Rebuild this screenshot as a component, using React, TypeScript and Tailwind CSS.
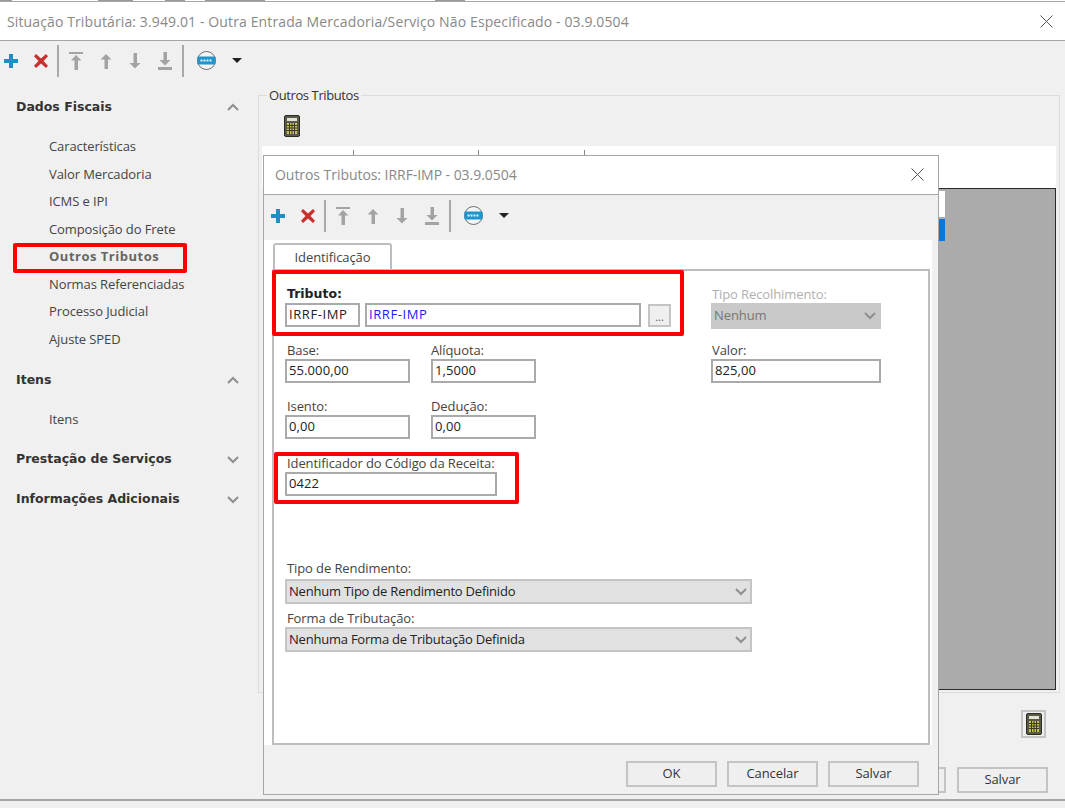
const FONT_BOLD = "font-['DejaVu_Sans',sans-serif] font-bold tracking-normal";

function PlusIcon() {
  return (
    <svg width="16" height="16" viewBox="0 0 16 16">
      <path d="M6 1h4v5h5v4h-5v5H6v-5H1V6h5z" fill="#1b8fc6" />
    </svg>
  );
}

function CrossIcon() {
  return (
    <svg width="16" height="16" viewBox="0 0 16 16">
      <path d="M3 1l5 4.500L13 1l2 2.200L10.500 8l4.500 4.800L13 15l-5-4.500L3 15l-2-2.200L5.500 8 1 3.200z" fill="#c9302c" />
    </svg>
  );
}

function ArrowUp({ bar }: { bar?: boolean }) {
  return (
    <svg width="16" height="18" viewBox="0 0 16 18" fill="#a3a3a3">
      {bar && <rect x="1" y="0" width="14" height="2" />}
      <path d={bar ? "M8 3l5.500 5.500H10V18H6.500V8.500H3z" : "M8 2l5.500 5.500H10V17H6.500V7.500H2.500z"} />
    </svg>
  );
}

function ArrowDown({ bar }: { bar?: boolean }) {
  return (
    <svg width="16" height="18" viewBox="0 0 16 18" fill="#a3a3a3">
      <path d={bar ? "M6.500 0H10v8h3.500L8 13.500 2.500 8h4z" : "M6.500 1H10v10h3.500L8 16.500 2.500 11h4z"} />
      {bar && <rect x="1" y="15" width="14" height="3" />}
    </svg>
  );
}

function WebIcon() {
  return (
    <svg width="19" height="19" viewBox="0 0 19 19">
      <circle cx="9.500" cy="9.500" r="9" fill="#f4f4f4" stroke="#6f6f6f" strokeWidth="1" />
      <rect x="0.500" y="5.500" width="18" height="8" rx="1" fill="#1f95cc" />
      <path d="M3.500 9.500h12" stroke="#e4f3fa" strokeWidth="2" strokeDasharray="2 1" />
    </svg>
  );
}

function Calculator() {
  return (
    <svg width="16" height="22" viewBox="0 0 16 22">
      <rect x="0.500" y="0.500" width="15" height="21" rx="1.500" fill="#5a5a48" stroke="#2b2b20" />
      <rect x="3" y="3" width="10" height="3" fill="#e3e3d8" />
      <rect x="3" y="8" width="10" height="11" fill="#c9c458" />
      <path d="M5.500 8v11M8 8v11M10.500 8v11M3 10.500h10M3 13h10M3 15.500h10" stroke="#3a3a20" strokeWidth="1" />
    </svg>
  );
}

function Toolbar() {
  return (
    <div className="flex h-full items-center">
      <div className="flex w-[19px] justify-end"><PlusIcon /></div>
      <div className="flex w-[30px] justify-end"><CrossIcon /></div>
      <div className="ml-[8px] mr-[9px] h-[32px] w-[2px] bg-[#a9a9a9]" />
      <div className="flex w-[16px] justify-center"><ArrowUp bar /></div>
      <div className="ml-[14px] flex w-[16px] justify-center"><ArrowUp /></div>
      <div className="ml-[13px] flex w-[16px] justify-center"><ArrowDown /></div>
      <div className="ml-[14px] flex w-[16px] justify-center"><ArrowDown bar /></div>
      <div className="ml-[9px] mr-[13px] h-[32px] w-[2px] bg-[#a9a9a9]" />
      <WebIcon />
      <div className="ml-[16px] h-0 w-0 border-x-[5px] border-t-[5px] border-x-transparent border-t-[#222]" />
    </div>
  );
}

function CloseX() {
  return (
    <svg width="13" height="13" viewBox="0 0 13 13" stroke="#555" strokeWidth="1" fill="none">
      <path d="M0.500 0.500l12 12M12.500 0.500l-12 12" />
    </svg>
  );
}

function Chevron({ up }: { up?: boolean }) {
  return (
    <svg width="12" height="8" viewBox="0 0 12 8" fill="none" stroke="#8f8f8f" strokeWidth="2">
      <path d={up ? "M1 7l5-5 5 5" : "M1 1l5 5 5-5"} />
    </svg>
  );
}

function SideHeader({ label, up, className }: { label: string; up?: boolean; className?: string }) {
  return (
    <div className={`flex h-[20px] items-center justify-between pl-[16px] pr-[19px] ${className ?? ""}`}>
      <span className={`${FONT_BOLD} text-[12.5px] text-[#333]`}>{label}</span>
      <Chevron up={up} />
    </div>
  );
}

function SideItem({ label, active }: { label: string; active?: boolean }) {
  return (
    <div className="relative flex h-[27.5px] items-center pl-[49px]">
      <span className={active ? "font-bold tracking-[0.5px] text-[#666]" : "text-[#444]"}>{label}</span>
    </div>
  );
}

function Field({ label, value, className, wrap, labelPad }: { label: string; value: string; className: string; wrap?: string; labelPad?: string }) {
  return (
    <div className={wrap}>
      <div className={`h-[17px] leading-[16px] text-[#444] ${labelPad ?? ""}`}>{label}</div>
      <div className={`flex h-[24px] items-center border-2 border-[#aaa] bg-white pl-[2px] tracking-[0.1px] text-[#222] ${className}`}>{value}</div>
    </div>
  );
}

function SelectBox({ value }: { value: string }) {
  return (
    <div className="flex h-[25px] w-[467px] items-center justify-between border-2 border-[#c4c4c4] bg-[#e1e1e1] pl-[2px] pr-[3px] tracking-[-0.22px] text-[#222]">
      <span>{value}</span>
      <Chevron />
    </div>
  );
}

function ActionButton({ label }: { label?: string }) {
  return (
    <div className="flex h-[26px] w-[91px] items-center justify-center border-2 border-[#c4c4c4] bg-[#efefef] text-[#333]">
      {label}
    </div>
  );
}

function Dialog() {
  return (
    <div className="absolute left-[263px] top-[155px] flex h-[640px] w-[676px] flex-col border border-[#a6a6a6] bg-[#f0f0f0]">
      <div className="flex h-[39px] items-center justify-between border-b border-[#a6a6a6] bg-white pb-px pl-[11px] pr-[14px] text-[14px] text-[#888]">
        <span className="tracking-[-0.05px]">Outros Tributos: IRRF-IMP - 03.9.0504</span>
        <CloseX />
      </div>
      <div className="h-[45px] pb-[4px] pl-[3px]"><Toolbar /></div>
      <div className="mr-[6px] flex flex-1 flex-col bg-white pl-[8px] pr-[2px]">
        <div className="flex h-[29px] items-end pl-[1px]">
          <div className="-mb-px flex h-[27px] w-[119px] items-center justify-center rounded-t-[3px] border-x-2 border-t-2 border-[#bdbdbd] bg-white text-[#444]">
            Identificação
          </div>
        </div>
        <div className="h-[476px] border-2 border-[#bdbdbd] bg-white pl-[11px] pt-[14px]">
          <div className="flex">
            <div className="w-[426px]">
              <div className={`${FONT_BOLD} h-[18px] pl-[2px] text-[12.5px] leading-[18px] text-[#222]`}>Tributo:</div>
              <div className="flex items-start">
                <div className="flex h-[24px] w-[75px] items-center border-2 border-[#aaa] pl-[2px] tracking-[0.6px] text-[#222]">IRRF-IMP</div>
                <div className="ml-[5px] flex h-[24px] w-[276px] items-center border-2 border-[#aaa] pl-[2px] tracking-[0.6px] text-[#1a1aff]">IRRF-IMP</div>
                <div className="ml-[7px] mt-px flex h-[23px] w-[23px] items-end justify-center border-2 border-[#c4c4c4] bg-[#efefef] pb-[2px] text-[11px] leading-[12px] text-[#555]">...</div>
              </div>
            </div>
            <div>
              <div className="h-[18px] pl-[1px] leading-[18px] text-[#b0b0b0]">Tipo Recolhimento:</div>
              <div className="flex h-[26px] w-[170px] items-center justify-between bg-[#c9c9c9] pl-[3px] pr-[5px] text-[#777]">
                Nenhum
                <Chevron />
              </div>
            </div>
          </div>
          <div className="mt-[13px] flex">
            <Field label="Base:" value="55.000,00" className="w-[125px]" labelPad="pl-[2px]" />
            <Field label="Alíquota:" value="1,5000" className="w-[105px]" wrap="ml-[21px]" />
            <Field label="Valor:" value="825,00" className="w-[170px]" wrap="ml-[175px]" labelPad="pl-[1px]" />
          </div>
          <div className="mt-[15px] flex">
            <Field label="Isento:" value="0,00" className="w-[125px]" labelPad="pl-[2px]" />
            <Field label="Dedução:" value="0,00" className="w-[105px]" wrap="ml-[21px]" />
          </div>
          <Field label="Identificador do Código da Receita:" value="0422" className="w-[212px]" wrap="mt-[16px]" labelPad="pl-[2px]" />
          <div className="mt-[64px] h-[19px] pl-[2px] leading-[16px] text-[#444]">Tipo de Rendimento:</div>
          <SelectBox value="Nenhum Tipo de Rendimento Definido" />
          <div className="mt-[6px] h-[17px] pl-[2px] leading-[16px] text-[#444]">Forma de Tributação:</div>
          <SelectBox value="Nenhuma Forma de Tributação Definida" />
        </div>
      </div>
      <div className="flex h-[49px] items-start justify-end gap-[10px] bg-[#f0f0f0] pr-[19px] pt-[16px]">
        <ActionButton label="OK" />
        <ActionButton label="Cancelar" />
        <ActionButton label="Salvar" />
      </div>
    </div>
  );
}

export default function App() {
  return (
    <div className="relative flex h-[808px] w-[1065px] flex-col overflow-hidden bg-[#f0f0f0] font-['Open_Sans',sans-serif] text-[13px] tracking-[-0.1px]">
      {/* bottoms of the window behind, just showing along the top edge */}
      <div className="flex h-[1px] bg-white">
        <div className="h-px w-[12px] bg-[#999]" />
        <div className="ml-[86px] h-px w-[35px] bg-[#999]" />
        <div className="ml-[32px] h-px w-[20px] bg-[#999]" />
        <div className="ml-[20px] h-px w-[60px] bg-[#999]" />
        <div className="ml-[170px] h-px w-[30px] bg-[#999]" />
      </div>
      <div className="flex h-[40px] items-center justify-between border-y border-[#a6a6a6] bg-white pl-[7px] pr-[12px] text-[#888]">
        <span className="text-[14px] tracking-[0.12px]">Situação Tributária: 3.949.01 - Outra Entrada Mercadoria/Serviço Não Especificado - 03.9.0504</span>
        <CloseX />
      </div>
      <div className="h-[37px] pt-[2px]"><Toolbar /></div>

      <div className="flex flex-1">
        <aside className="w-[258px] pt-[19px]">
          <SideHeader label="Dados Fiscais" up />
          <div className="mt-[16px]">
            <SideItem label="Características" />
            <SideItem label="Valor Mercadoria" />
            <SideItem label="ICMS e IPI" />
            <SideItem label="Composição do Frete" />
            <SideItem label="Outros Tributos" active />
            <SideItem label="Normas Referenciadas" />
            <SideItem label="Processo Judicial" />
            <SideItem label="Ajuste SPED" />
          </div>
          <SideHeader label="Itens" up className="mt-[17px]" />
          <div className="mt-[16px]"><SideItem label="Itens" /></div>
          <SideHeader label="Prestação de Serviços" className="mt-[16px]" />
          <SideHeader label="Informações Adicionais" className="mt-[20px]" />
        </aside>

        <main className="pt-[17px]">
          <div className="relative flex h-[598px] w-[802px] flex-col border border-[#dcdcdc] pl-[3px] pr-[3px]">
            <span className="absolute -top-[9px] left-[8px] bg-[#f0f0f0] px-[2px] leading-[16px] tracking-[-0.4px] text-[#333]">Outros Tributos</span>
            <div className="flex h-[50px] items-center pl-[22px] pt-[10px]"><Calculator /></div>
            <div className="flex h-[42px] items-start bg-white pt-[4px]">
              <div className="ml-[91px] h-[5px] w-px bg-[#888]" />
              <div className="ml-[124px] h-[5px] w-px bg-[#888]" />
              <div className="ml-[105px] h-[5px] w-px bg-[#888]" />
            </div>
            <div className="ml-px flex h-[502px] w-[793px] flex-col border border-[#2a2a2a] bg-[#ababab] pt-[2px]">
              <div className="h-[26px] w-[681px] bg-white" />
              <div className="mt-[2px] h-[22px] w-[681px] bg-[#0a78d7]" />
            </div>
          </div>
          <div className="flex justify-end pr-[14px] pt-[17px]">
            <div className="flex h-[28px] w-[25px] items-center justify-center border-2 border-[#c4c4c4]"><Calculator /></div>
          </div>
          <div className="mt-[28px] flex h-[26px] justify-end gap-[11px] pr-[12px] pt-px">
            {/* this button sits behind the dialog, only its right edge shows */}
            <ActionButton />
            <ActionButton label="Salvar" />
          </div>
        </main>
      </div>

      <div className="h-[9px] border-t-2 border-[#a6a6a6]" />
      <Dialog />
      {/* red annotation boxes drawn over the form */}
      <div className="absolute left-[13px] top-[243px] h-[30px] w-[174px] rounded-[2px] border-4 border-[#ff0000]" />
      <div className="absolute left-[272px] top-[270px] h-[66px] w-[412px] rounded-[2px] border-4 border-[#ff0000]" />
      <div className="absolute left-[274px] top-[452px] h-[52px] w-[245px] rounded-[2px] border-4 border-[#ff0000]" />
    </div>
  );
}
